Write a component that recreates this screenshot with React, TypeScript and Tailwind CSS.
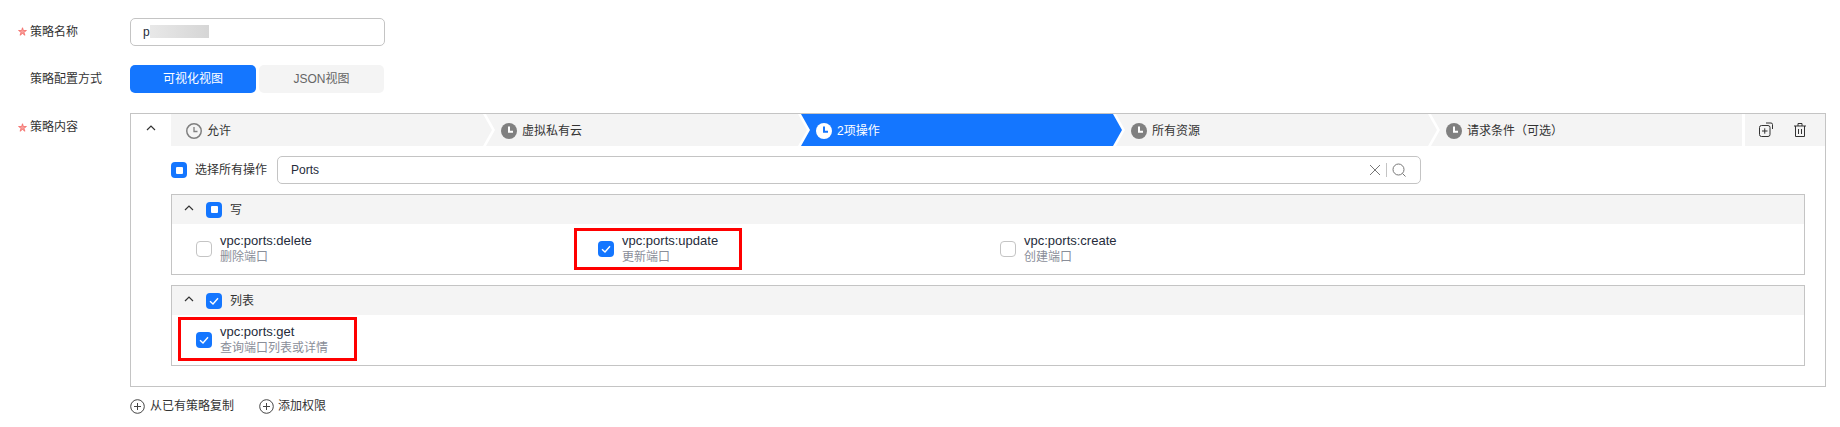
import React from 'react';

const ChevronUp = ({ className = '' }: { className?: string }) => (
  <svg width="12" height="12" viewBox="0 0 12 12" fill="none" stroke="#333" strokeWidth="1.2" className={className}>
    <path d="M2 8 L6 4 L10 8" />
  </svg>
);

const FilledClock = ({ active = false }: { active?: boolean }) => (
  <svg width="16" height="16" viewBox="0 0 16 16" className="shrink-0">
    <circle cx="8" cy="8" r="8" fill={active ? '#fff' : '#808080'} />
    <path d="M8 3.5 V8.8 H12" fill="none" stroke={active ? '#1476ff' : '#fff'} strokeWidth="2" />
  </svg>
);

const OutlineClock = () => (
  <svg width="16" height="16" viewBox="0 0 16 16" fill="none" stroke="#808080" className="shrink-0">
    <circle cx="8" cy="8" r="7.25" strokeWidth="1.5" />
    <path d="M8 4 V8.5 H11.5" strokeWidth="1.3" />
  </svg>
);

const CheckBox = ({ state }: { state: 'none' | 'some' | 'all' }) => {
  if (state === 'none') {
    return <div className="w-4 h-4 shrink-0 rounded-[4px] border border-[#c4c4c4] bg-white" />;
  }
  return (
    <div className="w-4 h-4 shrink-0 rounded-[4px] bg-[#1476ff] flex items-center justify-center">
      {state === 'some' ? (
        <div className="w-[7px] h-[7px] rounded-[1px] bg-white" />
      ) : (
        <svg width="12" height="12" viewBox="0 0 12 12" fill="none" stroke="#fff" strokeWidth="1.4">
          <path d="M2 6.2 L5 9 L10 3.2" />
        </svg>
      )}
    </div>
  );
};

const CirclePlus = () => (
  <svg width="15" height="15" viewBox="0 0 15 15" fill="none" stroke="#444" className="shrink-0">
    <circle cx="7.5" cy="7.5" r="6.8" />
    <path d="M4 7.5 H11 M7.5 4 V11" />
  </svg>
);

const RequiredStar = () => (
  <svg width="9" height="9" viewBox="0 0 10 10" fill="#f8a09c" stroke="#f4625d" strokeWidth="0.8" strokeLinejoin="round">
    <path d="M5 0.8 L6 3.9 L9.4 3.9 L6.6 5.9 L7.7 9.2 L5 7.2 L2.3 9.2 L3.4 5.9 L0.6 3.9 L4 3.9 Z" />
  </svg>
);

const Operation = ({ name, desc, checked, mark }: { name: string; desc: string; checked: boolean; mark?: string }) => (
  <div className="relative w-[402px] flex items-center gap-2 h-8">
    {mark && <div className={`absolute border-[3px] border-[#ff0000] pointer-events-none ${mark}`} />}
    <CheckBox state={checked ? 'all' : 'none'} />
    <div className="leading-4">
      <div className="text-[13px] text-[#252b3a]">{name}</div>
      <div className="text-xs text-[#8a8e99]">{desc}</div>
    </div>
  </div>
);

const Group = ({ title, state, children, className = '' }: { title: string; state: 'some' | 'all'; children: React.ReactNode; className?: string }) => (
  <div className={`w-[1634px] border border-[#c4c4c4] ${className}`}>
    <div className="h-[29px] bg-[#f4f4f4] flex items-center">
      <ChevronUp className="ml-[11px] mb-[3px]" />
      <div className="ml-[11px]"><CheckBox state={state} /></div>
      <span className="ml-2 text-xs text-[#333]">{title}</span>
    </div>
    <div className="h-[50px] pl-6 flex items-center">{children}</div>
  </div>
);

const Label = ({ text, required = false, className = '' }: { text: string; required?: boolean; className?: string }) => (
  <div className={`w-[130px] shrink-0 flex items-center text-xs text-[#333] ${className}`}>
    <span className="w-[30px] pl-[18px] flex items-center">{required && <RequiredStar />}</span>
    <span>{text}</span>
  </div>
);

const steps = [
  { text: '允许', first: true },
  { text: '虚拟私有云' },
  { text: '2项操作', active: true },
  { text: '所有资源' },
  { text: '请求条件（可选）', last: true },
];

export default function App() {
  return (
    <div className="w-[1840px] h-[427px] overflow-hidden bg-white pt-[18px] font-['Liberation_Sans','Noto_Sans_CJK_SC',sans-serif]">
      <div className="flex items-center h-[27px]">
        <Label text="策略名称" required />
        <div className="w-[255px] h-[28px] rounded-[5px] border border-[#c4c4c4] flex items-center pl-3 text-xs text-[#252b3a]">
          p
          <div className="ml-[0px] w-[59px] h-[13px] bg-gradient-to-r from-[#e8e8e8] to-[#d6d6d6]" />
        </div>
      </div>

      <div className="flex items-center h-7 mt-5">
        <Label text="策略配置方式" />
        <div className="flex gap-[3px] text-xs">
          <div className="w-[126px] h-7 rounded-[5px] bg-[#1476ff] text-white flex items-center justify-center">可视化视图</div>
          <div className="w-[125px] h-7 rounded-[5px] bg-[#f4f4f4] text-[#666] flex items-center justify-center">JSON视图</div>
        </div>
      </div>

      <div className="flex mt-5">
        <Label text="策略内容" required className="h-[28px]" />
        <div className="w-[1696px] h-[274px] border border-[#c4c4c4]">
          <div className="flex h-8">
            <div className="w-10 shrink-0 flex items-center justify-center pb-[4px]">
              <ChevronUp />
            </div>
            <div className="flex w-[1571px] text-xs">
              {steps.map((s, i) => (
                <div
                  key={s.text}
                  className={`h-8 pt-[1px] flex items-center gap-[5px] ${s.active ? 'bg-[#1476ff] text-white' : 'bg-[#f4f4f4] text-[#333]'} ${
                    s.first
                      ? 'w-[321px] pl-[15px] [clip-path:polygon(0_0,calc(100%-9px)_0,100%_50%,calc(100%-9px)_100%,0_100%)]'
                      : s.last
                        ? 'flex-1 -ml-[6px] pl-[15px] [clip-path:polygon(0_0,100%_0,100%_100%,0_100%,9px_50%)]'
                        : 'w-[321px] -ml-[6px] pl-[15px] [clip-path:polygon(0_0,calc(100%-9px)_0,100%_50%,calc(100%-9px)_100%,0_100%,9px_50%)]'
                  }`}
                >
                  {i === 0 ? <OutlineClock /> : <FilledClock active={s.active} />}
                  <span>{s.text}</span>
                </div>
              ))}
            </div>
            <div className="flex-1 ml-[3px] bg-[#f4f4f4] flex items-center">
              <svg width="16" height="16" viewBox="0 0 16 16" fill="none" stroke="#333" className="ml-[13px]">
                <rect x="1.5" y="3.5" width="10.5" height="11" rx="2" />
                <path d="M4 9 H9.5 M6.75 6.3 V11.7 M8 1 H13 Q14.5 1 14.5 2.5 V7" />
              </svg>
              <svg width="14" height="16" viewBox="0 0 14 16" fill="none" stroke="#333" className="ml-[19px]">
                <path d="M1 4 H13 M5 4 V1.5 H9 V4 M2.5 4 V14.5 H11.5 V4 M5.5 7 V12 M8.5 7 V12" />
              </svg>
            </div>
          </div>

          <div className="flex items-center mt-[10px] ml-10 h-7">
            <CheckBox state="some" />
            <span className="ml-2 w-[82px] text-xs text-[#333]">选择所有操作</span>
            <div className="w-[1144px] h-7 rounded-[5px] border border-[#c4c4c4] flex items-center pl-[13px] text-xs text-[#252b3a]">
              <span className="flex-1">Ports</span>
              <svg width="12" height="12" viewBox="0 0 12 12" fill="none" stroke="#777">
                <path d="M1 1 L11 11 M11 1 L1 11" />
              </svg>
              <div className="w-px h-[14px] bg-[#c4c4c4] ml-[5px]" />
              <svg width="14" height="14" viewBox="0 0 14 14" fill="none" stroke="#777" className="ml-[5px] mr-[14px]">
                <circle cx="6.5" cy="6.5" r="5.5" />
                <path d="M10.5 10.5 L13.5 13.5" />
              </svg>
            </div>
          </div>

          <div className="ml-10 mt-[10px]">
            <Group title="写" state="some">
              <Operation name="vpc:ports:delete" desc="删除端口" checked={false} />
              <Operation name="vpc:ports:update" desc="更新端口" checked mark="-left-[24px] -top-[5px] w-[168px] h-[42px]" />
              <Operation name="vpc:ports:create" desc="创建端口" checked={false} />
            </Group>
            <Group title="列表" state="all" className="mt-[10px]">
              <Operation name="vpc:ports:get" desc="查询端口列表或详情" checked mark="-left-[18px] -top-[7px] w-[179px] h-[44px]" />
            </Group>
          </div>
        </div>
      </div>

      <div className="flex items-center ml-[130px] mt-[10px] h-[18px] text-xs text-[#333]">
        <CirclePlus />
        <span className="ml-[5px]">从已有策略复制</span>
        <div className="ml-[25px]"><CirclePlus /></div>
        <span className="ml-[4px]">添加权限</span>
      </div>
    </div>
  );
}
